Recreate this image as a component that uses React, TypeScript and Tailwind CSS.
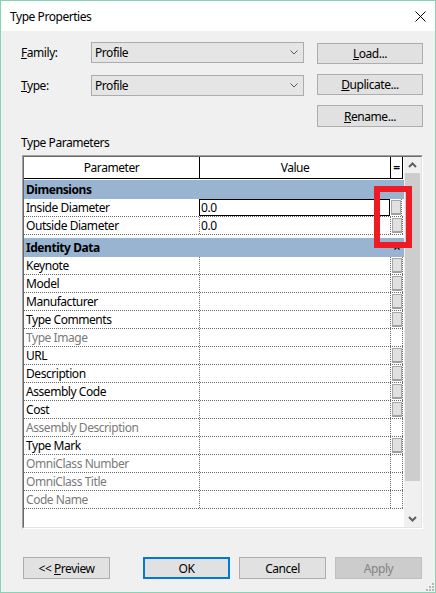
import React from "react";

type Row = { name: string; value?: string; gray?: boolean; btn?: boolean; selected?: boolean };

const groups: { title: string; mt: string; rows: Row[] }[] = [
  {
    title: "Dimensions",
    mt: "mt-[1px]",
    rows: [
      { name: "Inside Diameter", value: "0.0", btn: true, selected: true },
      { name: "Outside Diameter", value: "0.0", btn: true },
    ],
  },
  {
    title: "Identity Data",
    mt: "mt-[3px]",
    rows: [
      { name: "Keynote", btn: true },
      { name: "Model", btn: true },
      { name: "Manufacturer", btn: true },
      { name: "Type Comments", btn: true },
      { name: "Type Image", gray: true },
      { name: "URL", btn: true },
      { name: "Description", btn: true },
      { name: "Assembly Code", btn: true },
      { name: "Cost", btn: true },
      { name: "Assembly Description", gray: true },
      { name: "Type Mark", btn: true },
      { name: "OmniClass Number", gray: true },
      { name: "OmniClass Title", gray: true },
      { name: "Code Name", gray: true },
    ],
  },
];

function Chevron() {
  return (
    <svg width="8" height="5" viewBox="0 0 8 5">
      <polyline points="0.5,0.5 4,4 7.5,0.5" fill="none" stroke="#5a5a5a" strokeWidth="1" />
    </svg>
  );
}

function Combo({ text, className = "" }: { text: string; className?: string }) {
  return (
    <div
      className={`w-[213px] h-[21px] bg-[#e5e5e5] border border-[#acacac] flex items-center justify-between pl-[3px] pr-[5px] ${className}`}
    >
      <span>{text}</span>
      <Chevron />
    </div>
  );
}

function Btn({
  children,
  className = "",
}: {
  children: React.ReactNode;
  className?: string;
}) {
  return (
    <div
      className={`h-[21px] w-[106px] bg-[#e1e1e1] border border-[#adadad] flex items-center justify-center ${className}`}
    >
      {children}
    </div>
  );
}

function EditBtn() {
  return (
    <div className="ml-px mt-[1px] w-[10px] h-[15px] bg-[#e1e1e1] border border-[#a6a6a6] border-b-[2px] border-b-[#a0a0a0]" />
  );
}

function Caret({ color = "#000" }: { color?: string }) {
  return (
    <svg width="6" height="4" viewBox="0 0 6 4">
      <polyline points="0.5,3.5 3,1 5.5,3.5" fill="none" stroke={color} strokeWidth="1.2" />
    </svg>
  );
}

export default function App() {
  return (
    <div className="relative w-[436px] h-[593px] border border-[#83d6b4] bg-[#f0f0f0] flex flex-col text-[12px] tracking-[-0.45px] text-black font-['Noto_Sans',sans-serif] leading-[15px] overflow-hidden">
      {/* title bar */}
      <div className="h-[30px] bg-white flex items-center justify-between pl-[9px] pr-[9px] shrink-0">
        <span>Type Properties</span>
        <svg width="11" height="11" viewBox="0 0 11 11">
          <line x1="0.5" y1="0.5" x2="10.5" y2="10.5" stroke="#000" strokeWidth="1" />
          <line x1="10.5" y1="0.5" x2="0.5" y2="10.5" stroke="#000" strokeWidth="1" />
        </svg>
      </div>

      <div className="pl-[20px] flex flex-col">
        {/* family row */}
        <div className="flex items-start mt-[11px]">
          <div className="w-[70px] h-[21px] flex items-center">
            <span>
              <span className="underline">F</span>amily:
            </span>
          </div>
          <Combo text="Profile" />
          <Btn className="ml-[13px] mt-[1px]">
            <span>
              <span className="underline">L</span>oad...
            </span>
          </Btn>
        </div>

        {/* type row */}
        <div className="flex items-start mt-[10px]">
          <div className="w-[70px] h-[21px] mt-[1px] flex items-center">
            <span>
              <span className="underline">T</span>ype:
            </span>
          </div>
          <Combo text="Profile" className="mt-[1px]" />
          <Btn className="ml-[13px]">
            <span>
              <span className="underline">D</span>uplicate...
            </span>
          </Btn>
        </div>

        {/* rename */}
        <div className="flex mt-[9px]">
          <Btn className="ml-[296px] h-[22px]">
            <span>
              <span className="underline">R</span>ename...
            </span>
          </Btn>
        </div>

        <div className="mt-[8px]">Type Parameters</div>

        {/* table */}
        <div className="mt-[5px] ml-[1px] w-[401px] h-[374px] border border-[#a0a0a0] border-r-white border-b-white">
          <div className="w-full h-full border border-[#696969] border-r-[#e3e3e3] border-b-[#e3e3e3] bg-white flex">
            <div className="w-[380px] flex flex-col">
              {/* header */}
              <div className="flex h-[22px] w-[379px] border-b border-black shrink-0">
                <div className="w-[176px] border-r border-black flex items-center justify-center">
                  Parameter
                </div>
                <div className="w-[191px] border-r border-black flex items-center justify-center">
                  Value
                </div>
                <div className="w-[12px] border-r border-black flex items-center justify-center font-bold">
                  =
                </div>
              </div>

              {groups.map((g) => (
                <div key={g.title} className={`flex flex-col ${g.mt}`}>
                  <div className="h-[19px] w-[380px] bg-[#99b4d1] flex items-center">
                    <div className="w-[367px] pl-[2px] font-bold">{g.title}</div>
                    <div className="w-[12px] flex justify-center">
                      <Caret />
                    </div>
                  </div>
                  {g.rows.map((r) => (
                    <div
                      key={r.name}
                      className="flex h-[18px] w-[379px] border-b border-dotted border-[#6a6a6a]"
                    >
                      <div
                        className={`w-[176px] border-r border-dotted border-[#6a6a6a] pl-[2px] flex items-center ${
                          r.gray ? "text-[#7a7a7a]" : ""
                        }`}
                      >
                        {r.name}
                      </div>
                      {r.selected ? (
                        <div className="w-[191px] -ml-px flex">
                          <div className="w-[191px] h-[17px] border border-black flex items-center pl-[1px]">
                            {r.value}
                          </div>
                        </div>
                      ) : (
                        <div className="w-[191px] border-r border-dotted border-[#6a6a6a] flex items-center pl-[1px]">
                          {r.value ?? ""}
                        </div>
                      )}
                      <div className="w-[12px] border-r border-dotted border-[#6a6a6a]">
                        {r.btn ? <EditBtn /> : null}
                      </div>
                    </div>
                  ))}
                </div>
              ))}
            </div>

            {/* scrollbar */}
            <div className="w-[17px] bg-[#f0f0f0] flex flex-col">
              <div className="h-[16px] flex items-center justify-center">
                <svg width="9" height="6" viewBox="0 0 9 6">
                  <polyline points="1,5 4.5,1.5 8,5" fill="none" stroke="#606060" strokeWidth="2" />
                </svg>
              </div>
              <div className="mx-px h-[308px] bg-[#cdcdcd]" />
              <div className="flex-1" />
              <div className="h-[17px] flex items-center justify-center">
                <svg width="9" height="6" viewBox="0 0 9 6">
                  <polyline points="1,1 4.5,4.5 8,1" fill="none" stroke="#606060" strokeWidth="2" />
                </svg>
              </div>
            </div>
          </div>
        </div>

        {/* bottom buttons */}
        <div className="flex mt-[28px] ml-[2px]">
          <div className="w-[87px] h-[22px] bg-[#e1e1e1] border border-[#adadad] flex items-center justify-center">
            <span>
              &lt;&lt; <span className="underline">P</span>review
            </span>
          </div>
          <div className="ml-[33px] w-[87px] h-[22px] bg-[#e1e1e1] border-2 border-[#0078d7] flex items-center justify-center">
            OK
          </div>
          <div className="ml-[9px] w-[87px] h-[22px] bg-[#e1e1e1] border border-[#adadad] flex items-center justify-center">
            Cancel
          </div>
          <div className="ml-[9px] w-[87px] h-[22px] bg-[#cccccc] border border-[#bfbfbf] flex items-center justify-center text-[#838383]">
            Apply
          </div>
        </div>
      </div>

      {/* resize grip */}
      <svg className="absolute right-[1px] bottom-[1px]" width="9" height="9" viewBox="0 0 9 9">
        <rect x="7" y="1" width="2" height="2" fill="#b8b8b8" />
        <rect x="4" y="4" width="2" height="2" fill="#b8b8b8" />
        <rect x="7" y="4" width="2" height="2" fill="#b8b8b8" />
        <rect x="1" y="7" width="2" height="2" fill="#b8b8b8" />
        <rect x="4" y="7" width="2" height="2" fill="#b8b8b8" />
        <rect x="7" y="7" width="2" height="2" fill="#b8b8b8" />
      </svg>

      {/* red annotation */}
      <div className="absolute left-[373px] top-[185px] w-[38px] h-[62px] border-[6px] border-[#ed1c24]" />
    </div>
  );
}
